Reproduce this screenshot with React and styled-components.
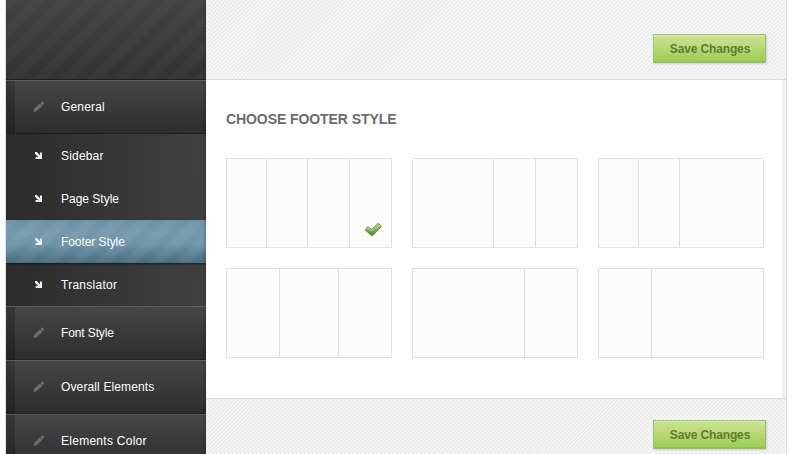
import React from 'react';
import styled, { createGlobalStyle, css } from 'styled-components';

const GlobalStyle = createGlobalStyle`
  body {
    margin: 0;
    background: #fff;
    overflow: hidden;
    font-family: "Liberation Sans", Arial, sans-serif;
  }
  * { box-sizing: border-box; }
`;

const hatch = 'repeating-linear-gradient(135deg, #ebebeb 0, #ebebeb 0.9px, #f8f8f8 1.5px, #f8f8f8 2.3px, #ebebeb 2.83px)';

const Frame = styled.div`
  display: flex;
  width: 782px;
  height: 454px;
  margin-left: 5px;
  overflow: hidden;
  border: solid #e2e2e2;
  border-width: 0 1px;
`;

const Sidebar = styled.nav`
  width: 200px;
  flex: none;
  background: #333;
`;

const Brand = styled.div`
  height: 80px;
  border-bottom: 1px solid #1f1f1f;
  background:
    linear-gradient(to left, rgba(0, 0, 0, 0.22), transparent 3px),
    repeating-linear-gradient(135deg, rgba(255, 255, 255, 0.022) 0 8px, transparent 10px 17px, rgba(255, 255, 255, 0.022) 19px),
    linear-gradient(#434343, #323232);
`;

const MenuItem = styled.a`
  display: flex;
  align-items: center;
  height: 54px;
  padding-left: 27px;
  color: #fff;
  font-size: 12px;
  letter-spacing: ${(p) => p.$tracking}px;
  border-top: 1px solid #5c5c5c;
  border-bottom: 1px solid #1f1f1f;
  background:
    linear-gradient(to left, rgba(0, 0, 0, 0.22), transparent 3px),
    linear-gradient(to right, rgba(0, 0, 0, 0.22) 9px, transparent 9px),
    linear-gradient(#464646, #2d2d2d);
`;

const Submenu = styled.div`
  background:
    linear-gradient(to left, rgba(0, 0, 0, 0.22), transparent 3px),
    repeating-linear-gradient(135deg, rgba(0, 0, 0, 0.13) 0 0.9px, transparent 1.5px 2.3px, rgba(0, 0, 0, 0.13) 2.83px),
    linear-gradient(to right, #2e2e2e, #454545);
`;

const SubItem = styled.a`
  display: flex;
  align-items: center;
  height: 43px;
  padding-left: 28px;
  color: #fff;
  font-size: 12px;
  letter-spacing: ${(p) => p.$tracking}px;
  ${(p) => p.$active && css`
    background:
      linear-gradient(to left, rgba(0, 0, 0, 0.18), transparent 4px),
      repeating-linear-gradient(135deg, rgba(255, 255, 255, 0.05) 0 7px, transparent 10px 16px, rgba(255, 255, 255, 0.05) 19px),
      linear-gradient(#6b90a4 0, #7599ac 30%, #6d94a8 55%, #486b7f 100%);
    box-shadow: 0 1px 2px rgba(0, 0, 0, 0.6);
  `}
`;

const IconSlot = styled.span`
  display: flex;
  flex: none;
  width: ${(p) => p.$width}px;
`;

const Main = styled.main`
  display: flex;
  flex-direction: column;
  flex: 1;
`;

const Bar = styled.div`
  display: flex;
  justify-content: flex-end;
  flex: none;
  padding-right: 20px;
  background: ${hatch};
`;

const TopBar = styled(Bar)`
  height: 80px;
  padding-top: 34px;
  border-bottom: 1px solid #dcdcdc;
`;

const BottomBar = styled(Bar)`
  height: 56px;
  padding-top: 21px;
  border-top: 1px solid #dcdcdc;
  box-shadow: inset 0 1px 0 #ececec;
`;

const SaveButton = styled.button`
  width: 113px;
  height: 29px;
  padding: 0 0 0 1px;
  border: 1px solid #9dbf6c;
  border-bottom: 2px solid #98bb65;
  background: linear-gradient(#cbe494, #9fce54);
  box-shadow: 1px 1px 2px rgba(0, 0, 0, 0.14), inset 0 1px 0 #d8edab;
  color: #607d33;
  font: bold 12px/28px "Liberation Sans", Arial, sans-serif;
  letter-spacing: -0.14px;
`;

const Content = styled.section`
  flex: none;
  height: 318px;
  padding: 31px 0 0 20px;
  border-right: 4px solid #f0f0f0;
  background: #fff;
`;

const Heading = styled.h2`
  margin: 0 0 31px;
  color: #6c6c6c;
  font-size: 14px;
  font-weight: bold;
  line-height: 16px;
  letter-spacing: -0.08px;
`;

const Choices = styled.div`
  display: grid;
  grid-template-columns: repeat(3, 166px);
  gap: 20px;
`;

const Choice = styled.div`
  display: grid;
  grid-template-columns: ${(p) => p.$columns};
  height: 90px;
  border: 1px solid #e1e1e1;
  background: #fcfcfc;
`;

const Column = styled.div`
  display: flex;
  justify-content: flex-end;
  align-items: flex-end;
  padding: 0 9px 10px 0;
  border-right: 1px solid #dfdfdf;
  &:last-child { border-right: 0; }
`;

const Pencil = () => (
  <svg width="12" height="12" viewBox="0 0 12 12">
    <path d="M0.4 11 L1.2 7.8 L7 2.2 L9.3 4.7 L3.7 10.3 Z M7.5 1.8 L8.8 0.6 Q9.5 0.2 10.3 1 L10.9 1.6 Q11.4 2.3 10.9 3 L9.7 4.2 Z" fill="#6c6c6c" />
  </svg>
);

const Arrow = () => (
  <svg width="9" height="9" viewBox="0 0 9 9">
    <path d="M1 1 H2.8 L6 4.2 V1.6 H8 V8 H1.6 V6 H4.2 L1 2.8 Z" fill="#eee" />
  </svg>
);

const Check = () => (
  <svg width="17" height="14" viewBox="0 0 17 14">
    <defs>
      <linearGradient id="checkFill" x1="0" y1="0" x2="0" y2="1">
        <stop offset="0" stopColor="#b4d48a" />
        <stop offset="0.5" stopColor="#86b158" />
        <stop offset="1" stopColor="#497d20" />
      </linearGradient>
    </defs>
    <path d="M0.6 6 L3 3.8 L6.6 6.6 L12.8 0.8 H14 L15.9 2.7 V4.2 L7.6 12.6 H6.4 L0.6 7.2 Z" fill="url(#checkFill)" stroke="#58803a" strokeWidth="0.9" strokeLinejoin="round" />
    <path d="M1.9 6 L3.1 5 L6.7 7.8 L13.1 1.9 L14.5 3" fill="none" stroke="#cae2aa" strokeWidth="0.8" />
  </svg>
);

const subItems = [
  { label: 'Sidebar', tracking: 0.18 },
  { label: 'Page Style', tracking: 0 },
  { label: 'Footer Style', tracking: -0.08 },
  { label: 'Translator', tracking: 0.26 },
];

const sections = [
  { label: 'Font Style', tracking: -0.12 },
  { label: 'Overall Elements', tracking: 0.13 },
  { label: 'Elements Color', tracking: 0.27 },
];

const layouts = [
  { columns: '40px 41px 42px 1fr', count: 4, selected: true },
  { columns: '81px 42px 1fr', count: 3 },
  { columns: '40px 41px 1fr', count: 3 },
  { columns: '53px 59px 1fr', count: 3 },
  { columns: '112px 1fr', count: 2 },
  { columns: '53px 1fr', count: 2 },
];

const Section = ({ label, tracking }) => (
  <MenuItem $tracking={tracking}>
    <IconSlot $width={28}><Pencil /></IconSlot>
    {label}
  </MenuItem>
);

export default function App() {
  return (
    <>
      <GlobalStyle />
      <Frame>
        <Sidebar>
          <Brand />
          <Section label="General" tracking={0.18} />
          <Submenu>
            {subItems.map(({ label, tracking }) => (
              <SubItem key={label} $tracking={tracking} $active={label === 'Footer Style'}>
                <IconSlot $width={27}><Arrow /></IconSlot>
                {label}
              </SubItem>
            ))}
          </Submenu>
          {sections.map((section) => <Section key={section.label} {...section} />)}
        </Sidebar>
        <Main>
          <TopBar><SaveButton>Save Changes</SaveButton></TopBar>
          <Content>
            <Heading>CHOOSE FOOTER STYLE</Heading>
            <Choices>
              {layouts.map((layout) => (
                <Choice key={layout.columns} $columns={layout.columns}>
                  {Array.from({ length: layout.count }, (_, i) => (
                    <Column key={i}>
                      {layout.selected && i === layout.count - 1 && <Check />}
                    </Column>
                  ))}
                </Choice>
              ))}
            </Choices>
          </Content>
          <BottomBar><SaveButton>Save Changes</SaveButton></BottomBar>
        </Main>
      </Frame>
    </>
  );
}
